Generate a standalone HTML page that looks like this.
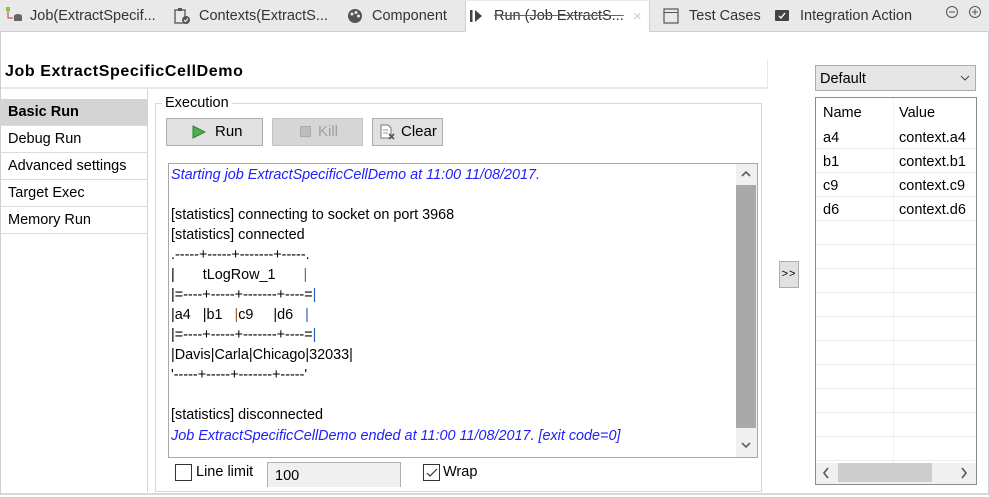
<!DOCTYPE html>
<html><head><meta charset="utf-8"><style>
*{box-sizing:border-box;margin:0;padding:0}
body{width:989px;height:497px;overflow:hidden;background:#fff;font-family:"Liberation Sans",sans-serif;font-size:14px;color:#000;position:relative}
.a{position:absolute;white-space:nowrap}
.tab{position:absolute;top:0;height:32px;line-height:33px;color:#333;font-size:14.5px}
.ln{position:absolute;left:171px;font-size:14.4px;white-space:pre}
.bl{color:#2020ff;font-style:italic}
.nav{position:absolute;left:0;width:147px;height:27px;line-height:27px;padding-left:8px;border-bottom:1px solid #dcdcdc;font-size:14.5px}
.row{position:absolute;left:816px;width:159px;height:24px;border-bottom:1px solid #ececec}
.c1{position:absolute;left:823px;font-size:14.5px}
.c2{position:absolute;left:899px;font-size:14.5px}
</style></head><body>
<div class="a" style="left:0;top:0;width:989px;height:32px;background:#e9e9e9;border-bottom:1px solid #cfcfcf"></div>
<div class="a" style="left:465px;top:1px;width:185px;height:31px;background:#fff;border-left:1px solid #cfcfcf;border-right:1px solid #cfcfcf"></div>
<svg class="a" style="left:6px;top:7px" width="16" height="16"><rect x="0" y="0" width="4" height="4" fill="#8ac24a"/><path d="M2 4v7h5" stroke="#c33" fill="none"/><ellipse cx="12" cy="9" rx="4" ry="2" fill="#666"/><rect x="8" y="9" width="8" height="5" fill="#666"/></svg>
<div class="tab" style="left:30px">Job(ExtractSpecif...</div>
<svg class="a" style="left:174px;top:8px" width="16" height="16"><rect x="1" y="2" width="10" height="13" fill="none" stroke="#555" stroke-width="1.3"/><rect x="4" y="0" width="4" height="3" fill="#555"/><circle cx="12" cy="12" r="4" fill="#555"/><path d="M10 12l1.5 1.5 2.5-3" stroke="#fff" fill="none"/></svg>
<div class="tab" style="left:199px">Contexts(ExtractS...</div>
<svg class="a" style="left:347px;top:8px" width="16" height="16"><circle cx="8" cy="8" r="7" fill="#555"/><circle cx="5" cy="6" r="1.5" fill="#e9e9e9"/><circle cx="9" cy="4.5" r="1.5" fill="#e9e9e9"/><circle cx="11.5" cy="8" r="1.5" fill="#e9e9e9"/></svg>
<div class="tab" style="left:372px">Component</div>
<svg class="a" style="left:469px;top:9px" width="14" height="14"><rect x="1" y="1" width="2.5" height="12" fill="#444"/><path d="M6 1l7 6-7 6z" fill="#444"/></svg>
<div class="tab" style="left:494px;text-decoration:line-through;text-decoration-color:#666">Run (Job ExtractS...</div>
<div class="a" style="left:633px;top:8px;color:#ccc;font-size:15px">×</div>
<svg class="a" style="left:663px;top:8px" width="16" height="16"><rect x="1" y="1" width="14" height="14" fill="none" stroke="#555" stroke-width="1.2"/><line x1="1" y1="4.5" x2="15" y2="4.5" stroke="#555"/></svg>
<div class="tab" style="left:689px">Test Cases</div>
<svg class="a" style="left:775px;top:9px" width="14" height="14"><rect x="0" y="1" width="14" height="11" rx="1" fill="#444"/><path d="M4 7l2 2 4-5" stroke="#fff" fill="none" stroke-width="1.4"/></svg>
<div class="tab" style="left:800px">Integration Action</div>
<svg class="a" style="left:945px;top:5px" width="40" height="16"><circle cx="7" cy="7" r="5.5" fill="none" stroke="#555"/><line x1="4" y1="7" x2="10" y2="7" stroke="#555"/><circle cx="30" cy="7" r="5.5" fill="none" stroke="#555"/><line x1="27" y1="7" x2="33" y2="7" stroke="#555"/><line x1="30" y1="4" x2="30" y2="10" stroke="#555"/></svg>
<div class="a" style="left:0;top:32px;width:989px;height:463px;border-left:1px solid #cfcfcf;border-right:1px solid #cfcfcf;border-bottom:2px solid #d8d8d8"></div>
<div class="a" style="left:5px;top:63px;font-weight:bold;font-size:16px;letter-spacing:0.6px">Job ExtractSpecificCellDemo</div>
<div class="a" style="left:1px;top:87px;width:767px;height:2px;background:#e4e9ef"></div>
<div class="a" style="left:767px;top:60px;width:1px;height:29px;background:#e4e9ef"></div>
<div class="a" style="left:147px;top:89px;width:1px;height:403px;background:#d4d4d4"></div>
<div class="nav" style="top:99px;background:#d4d4d4;font-weight:bold">Basic Run</div>
<div class="nav" style="top:126px">Debug Run</div>
<div class="nav" style="top:153px">Advanced settings</div>
<div class="nav" style="top:180px">Target Exec</div>
<div class="nav" style="top:207px">Memory Run</div>
<div class="a" style="left:155px;top:103px;width:607px;height:389px;border:1px solid #d8d8d8"></div>
<div class="a" style="left:162px;top:95px;background:#fff;padding:0 3px;font-size:14.5px">Execution</div>
<div class="a" style="left:166px;top:118px;width:97px;height:28px;background:#e1e1e1;border:1px solid #adadad"></div>
<svg class="a" style="left:192px;top:125px" width="14" height="14"><path d="M1 1l12 6-12 6z" fill="#4caf50" stroke="#2e7d32"/></svg>
<div class="a" style="left:215px;top:123px;font-size:15px">Run</div>
<div class="a" style="left:272px;top:118px;width:91px;height:28px;background:#d6d6d6;border:1px solid #c4c4c4"></div>
<div class="a" style="left:300px;top:126px;width:11px;height:11px;background:#bdbdbd;border:1px solid #aaa"></div>
<div class="a" style="left:318px;top:123px;color:#a0a0a0;font-size:15px">Kill</div>
<div class="a" style="left:372px;top:118px;width:71px;height:28px;background:#e1e1e1;border:1px solid #adadad"></div>
<svg class="a" style="left:380px;top:124px" width="16" height="16"><path d="M1 1h7l3 3v10H1z" fill="#fff" stroke="#777"/><line x1="3" y1="6" x2="8" y2="6" stroke="#999"/><line x1="3" y1="9" x2="8" y2="9" stroke="#999"/><path d="M9 10l5 5M14 10l-5 5" stroke="#555" stroke-width="1.6"/></svg>
<div class="a" style="left:401px;top:123px;font-size:15px">Clear</div>
<div class="a" style="left:168px;top:163px;width:590px;height:295px;border:1px solid #a8a8a8"></div>
<div class="a" style="left:736px;top:164px;width:21px;height:293px;background:#f0f0f0"></div>
<div class="a" style="left:736px;top:185px;width:20px;height:243px;background:#a9a9a9"></div>
<svg class="a" style="left:741px;top:170px" width="10" height="8"><path d="M1 6l4-4 4 4" stroke="#606060" stroke-width="1.6" fill="none"/></svg>
<svg class="a" style="left:741px;top:441px" width="10" height="8"><path d="M1 2l4 4 4-4" stroke="#606060" stroke-width="1.6" fill="none"/></svg>
<div class="ln bl" style="top:167px">Starting job ExtractSpecificCellDemo at 11:00 11/08/2017.</div>
<div class="ln" style="top:207px">[statistics] connecting to socket on port 3968</div>
<div class="ln" style="top:227px">[statistics] connected</div>
<div class="ln" style="top:247px">.-----+-----+-------+-----.</div>
<div class="ln" style="top:267px">|       tLogRow_1       <span style="color:#a06020">|</span></div>
<div class="ln" style="top:287px">|=----+-----+-------+----=<span style="color:#2060c0">|</span></div>
<div class="ln" style="top:307px">|a4   |b1   <span style="color:#a06020">|</span>c9     |d6   <span style="color:#2060c0">|</span></div>
<div class="ln" style="top:327px">|=----+-----+-------+----=<span style="color:#2060c0">|</span></div>
<div class="ln" style="top:347px">|Davis|Carla|Chicago|32033|</div>
<div class="ln" style="top:367px">'-----+-----+-------+-----'</div>
<div class="ln" style="top:407px">[statistics] disconnected</div>
<div class="ln bl" style="top:428px">Job ExtractSpecificCellDemo ended at 11:00 11/08/2017. [exit code=0]</div>
<div class="a" style="left:175px;top:464px;width:17px;height:17px;border:1px solid #333;background:#fff"></div>
<div class="a" style="left:196px;top:464px;font-size:14.5px">Line limit</div>
<div class="a" style="left:267px;top:462px;width:134px;height:25px;background:#f0f0f0;border:1px solid #b0b0b0;border-bottom:none;padding:5px 0 0 7px;font-size:14.5px">100</div>
<div class="a" style="left:423px;top:464px;width:17px;height:17px;border:1px solid #333;background:#fff"></div>
<svg class="a" style="left:425px;top:466px" width="14" height="14"><path d="M2 7l3 3 7-7" stroke="#333" fill="none" stroke-width="1.2"/></svg>
<div class="a" style="left:443px;top:464px;font-size:14.5px">Wrap</div>
<div class="a" style="left:779px;top:261px;width:20px;height:27px;background:#e1e1e1;border:1px solid #adadad;font-size:11px;line-height:25px;text-align:center;letter-spacing:1px">&gt;&gt;</div>
<div class="a" style="left:815px;top:65px;width:161px;height:26px;background:#e5e5e5;border:1px solid #acacac;padding:5px 0 0 4px;font-size:14.5px">Default</div>
<svg class="a" style="left:960px;top:74px" width="10" height="8"><path d="M1 2l4 4 4-4" stroke="#444" fill="none"/></svg>
<div class="a" style="left:815px;top:97px;width:162px;height:388px;border:1px solid #8c8c8c"></div>
<div class="a" style="left:893px;top:98px;width:1px;height:365px;background:#eef1f8"></div>
<div class="c1" style="top:105px">Name</div><div class="c2" style="top:105px">Value</div>
<div class="row" style="top:125px"></div><div class="c1" style="top:130px">a4</div><div class="c2" style="top:130px">context.a4</div>
<div class="row" style="top:149px"></div><div class="c1" style="top:154px">b1</div><div class="c2" style="top:154px">context.b1</div>
<div class="row" style="top:173px"></div><div class="c1" style="top:178px">c9</div><div class="c2" style="top:178px">context.c9</div>
<div class="row" style="top:197px"></div><div class="c1" style="top:202px">d6</div><div class="c2" style="top:202px">context.d6</div>
<div class="row" style="top:221px"></div><div class="row" style="top:245px"></div><div class="row" style="top:269px"></div><div class="row" style="top:293px"></div><div class="row" style="top:317px"></div><div class="row" style="top:341px"></div><div class="row" style="top:365px"></div><div class="row" style="top:389px"></div><div class="row" style="top:413px"></div><div class="row" style="top:437px"></div>
<div class="a" style="left:816px;top:463px;width:160px;height:21px;background:#f0f0f0"></div>
<div class="a" style="left:838px;top:463px;width:94px;height:19px;background:#cdcdcd"></div>
<svg class="a" style="left:822px;top:467px" width="8" height="12"><path d="M6 1l-4 5 4 5" stroke="#555" stroke-width="1.6" fill="none"/></svg>
<svg class="a" style="left:960px;top:467px" width="8" height="12"><path d="M2 1l4 5-4 5" stroke="#555" stroke-width="1.6" fill="none"/></svg>
</body></html>
